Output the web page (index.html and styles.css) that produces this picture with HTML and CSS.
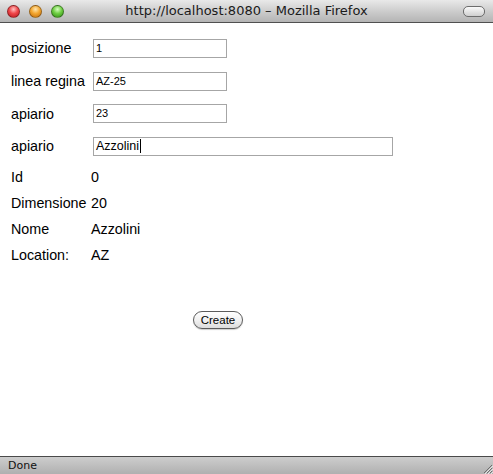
FILE: index.html
```html
<!DOCTYPE html>
<html>
<head>
<meta charset="utf-8">
<link rel="stylesheet" href="styles.css">
</head>
<body>
<div class="window">
  <div class="titlebar">
    <div class="lights">
      <span class="light red"></span>
      <span class="light orange"></span>
      <span class="light green"></span>
    </div>
    <div class="title">http://localhost:8080 – Mozilla Firefox</div>
    <span class="pill"></span>
  </div>
  <div class="content">
    <div class="frow"><span class="label">posizione</span><div class="field short">1</div></div>
    <div class="frow"><span class="label">linea regina</span><div class="field short">AZ-25</div></div>
    <div class="frow"><span class="label">apiario</span><div class="field short">23</div></div>
    <div class="frow"><span class="label">apiario</span><div class="field long focus">Azzolini<span class="caret"></span></div></div>
    <div class="info">
      <div class="trow"><span class="label">Id</span><span class="val">0</span></div>
      <div class="trow"><span class="label">Dimensione</span><span class="val">20</span></div>
      <div class="trow"><span class="label">Nome</span><span class="val">Azzolini</span></div>
      <div class="trow"><span class="label">Location:</span><span class="val">AZ</span></div>
    </div>
    <div class="actions"><button class="btn">Create</button></div>
  </div>
  <div class="statusbar">
    <span class="status">Done</span>
    <svg class="grip" width="12" height="12" viewBox="0 0 12 12">
      <path d="M11 3 L3 11 M11 6 L6 11 M11 9 L9 11" stroke="#6e6e6e" stroke-width="1"/>
      <path d="M12 4 L4 12 M12 7 L7 12 M12 10 L10 12" stroke="#e6e6e6" stroke-width="1"/>
    </svg>
  </div>
</div>
</body>
</html>
```

FILE: styles.css
```css
html, body {
  margin: 0;
  padding: 0;
}
body {
  width: 493px;
  height: 474px;
  overflow: hidden;
  font-family: "Liberation Sans", Arial, sans-serif;
  background: #fff;
}
.window {
  width: 493px;
  height: 474px;
  display: flex;
  flex-direction: column;
}
.titlebar {
  height: 22px;
  flex: none;
  border-bottom: 1px solid #505050;
  background: linear-gradient(#e9e9e9, #cdcdcd 50%, #b4b4b4);
  display: flex;
  align-items: center;
  position: relative;
}
.lights {
  display: flex;
  gap: 9px;
  padding-left: 7px;
}
.light {
  width: 13px;
  height: 13px;
  border-radius: 50%;
  box-sizing: border-box;
  border: 1px solid rgba(0,0,0,0.35);
}
.red { background: radial-gradient(circle at 50% 30%, #ffc2c2 0, #f0474a 45%, #b5161b 100%); }
.orange { background: radial-gradient(circle at 50% 30%, #ffe6b0 0, #f4a832 45%, #c06a0a 100%); }
.green { background: radial-gradient(circle at 50% 30%, #d6ffc0 0, #6fcf44 45%, #2f8a14 100%); }
.title {
  position: absolute;
  left: 0;
  right: 0;
  top: 0;
  line-height: 22px;
  text-align: center;
  font-family: "DejaVu Sans", sans-serif;
  font-size: 13px;
  color: #1a1a1a;
  pointer-events: none;
}
.pill {
  margin-left: auto;
  margin-right: 8px;
  width: 20px;
  height: 9px;
  border-radius: 5px;
  border: 1px solid #6d6d6d;
  background: linear-gradient(#fafafa, #cfcfcf);
}
.content {
  flex: 1;
  padding: 9px 0 0 11px;
  font-size: 14.3px;
  color: #000;
}
.frow {
  height: 32.7px;
  display: flex;
  align-items: center;
}
.label {
  width: 80px;
  flex: none;
  white-space: nowrap;
}
.field {
  margin-left: 2px;
  height: 19px;
  box-sizing: border-box;
  border: 1px solid #a6a6a6;
  padding: 0 0 0 2px;
  font-size: 11px;
  line-height: 17px;
  background: #fff;
  display: flex;
  align-items: center;
}
.short { width: 134px; }
.long { width: 300px; }
.focus { font-size: 12.5px; }
.caret {
  display: inline-block;
  width: 1px;
  height: 14px;
  background: #000;
  margin-left: 1px;
}
.info {
  margin-top: 1px;
}
.trow {
  height: 26.2px;
  display: flex;
  align-items: center;
}
.actions {
  margin-top: 42px;
  padding-left: 182px;
}
.btn {
  width: 50px;
  height: 18px;
  margin: 0;
  padding: 0;
  border: 1px solid #5c5c5c;
  border-radius: 9px;
  background: linear-gradient(#ffffff, #f1f1f1 50%, #dcdcdc);
  box-shadow: 0 1px 1px rgba(0,0,0,0.2);
  font-family: "Liberation Sans", Arial, sans-serif;
  font-size: 11.5px;
  color: #000;
}
.statusbar {
  height: 17px;
  flex: none;
  border-top: 1px solid #4a4a4a;
  background: linear-gradient(#cdcdcd, #b0b0b0);
  display: flex;
  align-items: center;
  padding-left: 8px;
  position: relative;
}
.status {
  font-family: "DejaVu Sans", sans-serif;
  font-size: 11px;
  color: #111;
}
.grip {
  position: absolute;
  right: 0;
  bottom: 0;
}
```
